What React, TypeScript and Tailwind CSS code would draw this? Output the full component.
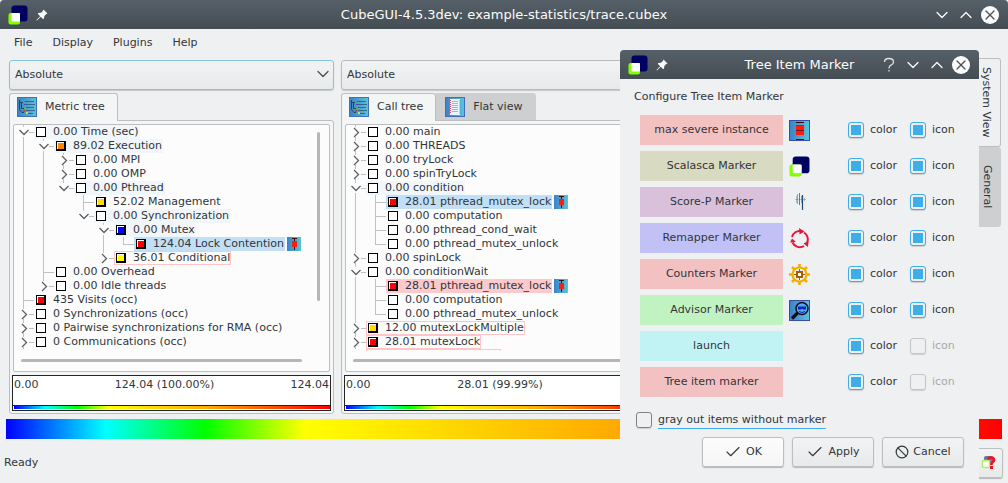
import React from 'react';
import { Ban, Check, ChevronDown, ChevronUp, X } from 'lucide-react';

type Row = {
  // one character per indent cell: | line, + tee, L end, v/V open, >/) closed (V and ) are last children)
  branch: string;
  text: string;
  fill?: string;
  mark?: 'path' | 'selected' | 'marked' | 'framed';
  pin?: boolean;
};

const metricRows: Row[] = [
  { branch: 'v', text: '0.00 Time (sec)', mark: 'path' },
  { branch: '|v', text: '89.02 Execution', fill: '#ff8800', mark: 'path' },
  { branch: '||>', text: '0.00 MPI' },
  { branch: '||>', text: '0.00 OMP' },
  { branch: '||V', text: '0.00 Pthread', mark: 'path' },
  { branch: '|| +', text: '52.02 Management', fill: '#ffdd00' },
  { branch: '|| V', text: '0.00 Synchronization', mark: 'path' },
  { branch: '||  v', text: '0.00 Mutex', fill: '#0000ff', mark: 'path' },
  { branch: '||  |L', text: '124.04 Lock Contention', fill: '#ff0000', mark: 'selected', pin: true },
  { branch: '||  )', text: '36.01 Conditional', fill: '#ffff00', mark: 'framed' },
  { branch: '|+', text: '0.00 Overhead' },
  { branch: '|)', text: '0.00 Idle threads' },
  { branch: '+', text: '435 Visits (occ)', fill: '#ff0000' },
  { branch: '>', text: '0 Synchronizations (occ)' },
  { branch: '>', text: '0 Pairwise synchronizations for RMA (occ)' },
  { branch: '>', text: '0 Communications (occ)' },
];

const callRows: Row[] = [
  { branch: '>', text: '0.00 main' },
  { branch: '>', text: '0.00 THREADS' },
  { branch: '>', text: '0.00 tryLock' },
  { branch: '>', text: '0.00 spinTryLock' },
  { branch: 'v', text: '0.00 condition', mark: 'path' },
  { branch: '|+', text: '28.01 pthread_mutex_lock', fill: '#ff0000', mark: 'selected', pin: true },
  { branch: '|+', text: '0.00 computation' },
  { branch: '|+', text: '0.00 pthread_cond_wait' },
  { branch: '|L', text: '0.00 pthread_mutex_unlock' },
  { branch: '>', text: '0.00 spinLock' },
  { branch: 'v', text: '0.00 conditionWait' },
  { branch: '|+', text: '28.01 pthread_mutex_lock', fill: '#ff0000', mark: 'marked', pin: true },
  { branch: '|+', text: '0.00 computation' },
  { branch: '|L', text: '0.00 pthread_mutex_unlock' },
  { branch: '>', text: '12.00 mutexLockMultiple', fill: '#ffdd00', mark: 'framed' },
  { branch: '>', text: '28.01 mutexLock', fill: '#ff0000', mark: 'framed' },
];

const markStyles = {
  path: 'bg-[#f1f6fa]',
  selected: 'bg-[#c1dff5]',
  marked: 'bg-[#fdc9cb]',
  framed: 'outline outline-1 -outline-offset-1 outline-[#fdc5c6]',
};

const rainbow = 'bg-[linear-gradient(to_right,#0000ff,#00ffff_10%,#00ff00_20%,#ffff00_30%,#ffa800_62%,#ff0000)]';

const Branch: React.FC<{ kind: string }> = ({ kind }) => (
  <svg width="20" height="14" className="shrink-0" fill="none" shapeRendering="crispEdges" stroke="#c0c1c2">
    {kind === '|' && <path d="M9.5 0V14" />}
    {kind === '+' && <path d="M9.5 0V14M9.5 7.5H20" />}
    {kind === 'L' && <path d="M9.5 0V7.5H20" />}
    {'v>'.includes(kind) && <path d="M9.5 0V2M9.5 12V14M15 7.5H20" />}
    {'V)'.includes(kind) && <path d="M9.5 0V2M15 7.5H20" />}
    {'vV'.includes(kind) && <path d="M5.5 5L10 9.5L14.5 5" stroke="#5c6063" shapeRendering="auto" strokeWidth="1.3" />}
    {'>)'.includes(kind) && <path d="M8 3L12.5 7.5L8 12" stroke="#5c6063" shapeRendering="auto" strokeWidth="1.3" />}
  </svg>
);

const Swatch: React.FC<{ fill?: string }> = ({ fill }) => (
  <svg width="10" height="10" className="shrink-0" shapeRendering="crispEdges">
    <rect width="10" height="10" fill="#000" />
    <rect x="1" y="1" width={fill ? 7 : 8} height={fill ? 7 : 8} fill="#fff" />
    {fill && <rect x="2" y="2" width="6" height="6" fill={fill} />}
  </svg>
);

const PinIcon: React.FC = () => (
  <svg width="14" height="14" className="ml-[2px] shrink-0" shapeRendering="crispEdges">
    <rect width="14" height="14" fill="url(#blue)" />
    <path d="M5 1.5H10M7.5 1V13" stroke="#3c1010" />
    <rect x="5" y="4" width="5" height="6" fill="#f3220f" />
  </svg>
);

const CubeIcon: React.FC<{ size: number }> = ({ size }) => (
  <svg width={size} height={size} viewBox="0 0 20 20">
    <rect x="3.5" y="0.5" width="16" height="16" rx="3" fill="#000060" />
    <rect x="0.5" y="8" width="11.5" height="11.5" rx="2" fill="#80ff00" />
    <rect x="3.5" y="8" width="8.5" height="8.5" rx="1" fill="#fff" />
  </svg>
);

const Pushpin: React.FC = () => (
  <svg width="12" height="12" viewBox="0 0 12 12" fill="#fcfcfc">
    <path d="M7.5 0.5L11.5 4.5L10.3 5L8.3 7L8 9.8L7 10L4.7 7.7L1 11.5L0.5 11L4.2 7.2L2 5L2.2 4L5 3.8L7 1.8Z" />
  </svg>
);

const TreeIcon: React.FC = () => (
  <svg width="20" height="20" viewBox="0 0 20 20">
    <defs>
      <linearGradient id="blue">
        <stop offset="0" stopColor="#3a82c8" />
        <stop offset="1" stopColor="#5cc2da" />
      </linearGradient>
    </defs>
    <rect x="0.5" y="0.5" width="19" height="19" fill="url(#blue)" stroke="#3f6fba" />
    <g fill="none" stroke="#28455e">
      <path d="M2.5 3V12.5L5 15.5H7M2.5 5.5H7M4.5 6V11.5H7" />
      <path d="M8 4.5H17M9 7.5H18M9 10.5H17M9 13.5H18M10 16.5H16" strokeWidth="0.9" strokeOpacity="0.75" />
    </g>
    <path d="M6 4h2v2h-2z" fill="#24b6a4" />
    <path d="M7 10h2v2h-2z" fill="#35c936" />
    <path d="M6 13h2v2h-2z" fill="#d0384c" />
    <path d="M9 15h2v2h-2z" fill="#e2d63a" />
    <path d="M7 7h2v1h-2z" fill="#6b3cc7" />
  </svg>
);

const FlatIcon: React.FC = () => (
  <svg width="20" height="20" viewBox="0 0 20 20">
    <rect x="0.5" y="0.5" width="19" height="19" fill="url(#blue)" stroke="#3f6fba" />
    <rect x="5" y="2" width="10" height="16" fill="#eaf6ff" />
    <path d="M7 4.5H13M7 6.5H13M7 8.5H13M7 10.5H13M7 12.5H13M7 14.5H13" stroke="#8abce8" />
    <path d="M5.5 3V17" stroke="#e05060" strokeDasharray="1 1" />
    <path d="M14.5 3V17" stroke="#a9d3f3" />
  </svg>
);

const SevereIcon: React.FC = () => (
  <svg width="21" height="21" viewBox="0 0 21 21" shapeRendering="crispEdges">
    <rect x="0.5" y="0.5" width="20" height="20" fill="url(#blue)" stroke="#3450a8" />
    <path d="M7 2.5H15M7 19.5H15" stroke="#2b0c14" />
    <rect x="7" y="6" width="8" height="9" fill="#ff1c0a" />
    <path d="M7 10.5H15" stroke="#8c1008" />
    <path d="M7 5.5H15" stroke="#c02018" />
  </svg>
);

const ScorePIcon: React.FC = () => (
  <svg width="21" height="21" viewBox="0 0 21 21" stroke="#1d4d75" fill="none">
    <path d="M6 7.5H17" strokeOpacity="0.25" />
    <path d="M7.5 4V11" strokeOpacity="0.3" />
    <path d="M8.5 2V12" strokeOpacity="0.45" />
    <path d="M10.5 1V13" strokeOpacity="0.7" />
    <path d="M12.5 4V11" strokeOpacity="0.45" />
    <path d="M13.5 3V18" strokeWidth="1.2" />
    <path d="M15.5 6V9" strokeOpacity="0.3" />
  </svg>
);

const RemapperIcon: React.FC = () => (
  <svg width="21" height="21" viewBox="0 0 21 21">
    <g fill="none" stroke="#e3173e" strokeWidth="2">
      <path d="M3 9A8 8 0 0 1 12 3" />
      <path d="M15 4.5A8 8 0 0 1 18 15" />
      <path d="M15 18A8 8 0 0 1 3.5 14.5" />
    </g>
    <path d="M10 0L15.5 3.5L10.5 6.5Z M19.5 13L14.5 15.5L19 19Z M1 14.5L3 10.5L7 14Z" fill="#e3173e" />
  </svg>
);

const GearIcon: React.FC = () => (
  <svg width="21" height="21" viewBox="0 0 21 21">
    <circle cx="10.5" cy="10.5" r="7" fill="none" stroke="#f0b000" strokeWidth="2.2" />
    <path
      d="M10.5 0V4M10.5 17V21M0 10.5H4M17 10.5H21M3 3L5.5 5.5M15.5 15.5L18 18M18 3L15.5 5.5M3 18L5.5 15.5"
      stroke="#f0b000"
      strokeWidth="2.6"
    />
    <path d="M10.5 5V16M5 10.5H16" stroke="#a85c00" strokeWidth="1" />
    <rect x="8" y="8" width="5" height="5" fill="#fff" stroke="#a85c00" strokeWidth="2" />
  </svg>
);

const AdvisorIcon: React.FC = () => (
  <svg width="21" height="21" viewBox="0 0 21 21">
    <rect x="0.5" y="0.5" width="20" height="20" fill="url(#blue)" stroke="#3450a8" />
    <circle cx="13" cy="8.5" r="6" fill="#55a9e8" stroke="#160a1c" strokeWidth="1.5" />
    <path d="M9 6.5H17V9.5H14L13 8.5L12 9.5H9Z" fill="#0a22c8" />
    <path d="M10 11.5Q13 13.5 16 11.5" stroke="#0a22c8" fill="none" />
    <path d="M8.5 13L3 18.5" stroke="#160a1c" strokeWidth="3.2" />
  </svg>
);

const HelpCubeIcon: React.FC = () => (
  <svg width="16" height="16" viewBox="0 0 16 16">
    <rect x="3" y="1" width="9" height="9" rx="2" fill="#7070a8" />
    <rect x="1.5" y="5.5" width="7" height="7" rx="1" fill="#fff" stroke="#b0f060" strokeWidth="1.6" />
    <path d="M7.5 4.5Q7.5 2.5 10.3 2.5Q13 2.5 13 5Q13 6.5 11.5 7.3Q10.3 8 10.3 10" stroke="#f5101c" strokeWidth="2.6" fill="none" />
    <rect x="9" y="11" width="3" height="3" fill="#f5101c" />
  </svg>
);

const CloseButton: React.FC = () => (
  <button aria-label="Close" className="mx-px flex size-[18px] items-center justify-center rounded-full bg-[#fcfcfc] text-[#4a5157]">
    <X size={16} strokeWidth={1.8} />
  </button>
);

const TitleBar: React.FC<{ title: string; help?: boolean }> = ({ title, help }) => (
  <header className="grid h-[29px] grid-cols-[1fr_auto_1fr] items-center rounded-t-[4px] bg-linear-to-b from-[#566068] to-[#454d54] px-2 text-[13px] text-[#fcfcfc]">
    <div className="flex items-center gap-2">
      <CubeIcon size={20} />
      <Pushpin />
    </div>
    <h1 className="whitespace-nowrap">{title}</h1>
    <div className="flex items-center justify-end gap-1">
      {help && (
        <button aria-label="Help" className="w-5 text-[#dfe1e2]">
          <svg width="20" height="20" viewBox="0 0 20 20" fill="none" stroke="currentColor" strokeWidth="1.3">
            <path d="M5.5 7Q5.5 3.5 10 3.5Q14.5 3.5 14.5 7Q14.5 9 12 10.2Q10 11.2 10 13.5M10 15V16.5" />
          </svg>
        </button>
      )}
      <button aria-label="Minimize"><ChevronDown size={20} strokeWidth={1.5} /></button>
      <button aria-label="Maximize"><ChevronUp size={20} strokeWidth={1.5} /></button>
      <CloseButton />
    </div>
  </header>
);

const ModeSelect: React.FC<{ label: string; focused?: boolean }> = ({ label, focused }) => (
  <div className="relative">
    <select
      aria-label={label}
      className={`h-[30px] w-full appearance-none rounded-[3px] border bg-linear-to-b from-[#f2f3f3] to-[#e8e9ea] pt-px pl-[5px] shadow-[0_1px_1px_#c4c6c8] ${
        focused ? 'border-[#7fc5ea]' : 'border-[#b9bbbd]'
      }`}
    >
      <option>Absolute</option>
    </select>
    <ChevronDown size={20} strokeWidth={1.5} className="pointer-events-none absolute top-1 right-px text-[#4a4e51]" />
  </div>
);

const Tab: React.FC<{ icon: React.ReactNode; text: string; active?: boolean }> = ({ icon, text, active }) => (
  <button
    role="tab"
    aria-selected={!!active}
    className={`flex items-center gap-2 ${
      active
        ? '-mb-px rounded-t-[3px] border border-b-0 border-[#bcbec0] bg-[#f4f6f6] pr-3 pb-px pl-[7px]'
        : 'rounded-tr-[3px] bg-[#cecfd0] pr-[14px] pl-[9px]'
    }`}
  >
    {icon}
    <span className="pt-px">{text}</span>
  </button>
);

const Tree: React.FC<{ rows: Row[]; more?: boolean }> = ({ rows, more }) => (
  <div className="mx-px rounded-[2px] border border-[#bcbec0] bg-[#fcfcfc] pb-[9px]">
    <div className="flex">
      <div role="tree" className="h-[226px] min-w-0 flex-1 overflow-hidden">
        {rows.map((row, i) => (
          <div key={i} role="treeitem" className="flex h-[14px] items-center">
            {row.branch.split('').map((kind, n) => (
              <Branch key={n} kind={kind} />
            ))}
            <span className={`flex h-[14px] items-center gap-[7px] pr-px pl-[2px] whitespace-nowrap ${row.mark ? markStyles[row.mark] : ''}`}>
              <Swatch fill={row.fill} />
              <span className="pt-px">{row.text}</span>
            </span>
            {row.pin && <PinIcon />}
          </div>
        ))}
        {more && <div className="ml-5 h-[14px] w-[135px] border border-[#fdc5c6]"></div>}
      </div>
      <div className="mt-[7px] mr-[9px] h-[169px] w-[3px] rounded-full bg-[#b5b6b7]"></div>
    </div>
    <div className="mt-2 mr-[27px] ml-[7px] h-[3px] rounded-full bg-[#b5b6b7]"></div>
  </div>
);

const ValueBar: React.FC<{ values: string[] }> = ({ values }) => (
  <div className="mt-[3px] border border-[#232629] bg-white">
    <div className="flex h-[29px] justify-between px-px leading-[18px]">
      {values.map((value) => (
        <span key={value}>{value}</span>
      ))}
    </div>
    <div className="border-t border-[#232629] pb-px pl-px">
      <div className={`h-[3px] ${rainbow}`}></div>
    </div>
  </div>
);

const paneClass = 'rounded-[3px] rounded-tl-none border border-[#bcbec0] bg-[#f4f6f6] px-[2px] pt-[3px] pb-[2px]';

const markers = [
  { name: 'max severe instance', color: 'bg-[#f3c1c2]', icon: <SevereIcon /> },
  { name: 'Scalasca Marker', color: 'bg-[#d8dac1]', icon: <CubeIcon size={21} /> },
  { name: 'Score-P Marker', color: 'bg-[#d9c1db]', icon: <ScorePIcon /> },
  { name: 'Remapper Marker', color: 'bg-[#c1c1f5]', icon: <RemapperIcon /> },
  { name: 'Counters Marker', color: 'bg-[#f3c1c2]', icon: <GearIcon /> },
  { name: 'Advisor Marker', color: 'bg-[#c1f3c2]', icon: <AdvisorIcon /> },
  { name: 'launch', color: 'bg-[#c1f3f5]', icon: null },
  { name: 'Tree item marker', color: 'bg-[#f3c1c2]', icon: null },
];

const checkClass =
  'size-4 shrink-0 appearance-none rounded-[3px] border border-[#7f8386] bg-clip-content p-[2px] shadow-[0_1px_1px_#cdcfd1] checked:border-[#3daee9] checked:bg-[#3daee9] disabled:border-[#c2c4c5]';

const CheckOption: React.FC<{ text: string; disabled?: boolean }> = ({ text, disabled }) => (
  <label className={`flex items-center gap-[6px] ${disabled ? 'text-[#a8aaab]' : ''}`}>
    <input type="checkbox" defaultChecked={!disabled} disabled={disabled} className={checkClass} />
    <span className="pt-px">{text}</span>
  </label>
);

const buttonClass =
  'flex h-[30px] w-[82px] items-center justify-center gap-1 rounded-[3px] border border-[#bcbec0] bg-linear-to-b shadow-[0_1px_1px_#b4b6b8]';

const MarkerDialog: React.FC = () => (
  <section role="dialog" aria-label="Tree Item Marker" className="absolute top-[50px] right-[29px] w-[359px] rounded-t-[4px] bg-[#eff0f1]">
    <TitleBar title="Tree Item Marker" help />
    <div className="pt-2 pr-[15px] pb-[15px] pl-[14px]">
      <p className="leading-5">Configure Tree Item Marker</p>
      <div className="mt-2 flex flex-col gap-[6px] pl-[6px]">
        {markers.map((marker) => (
          <div key={marker.name} className="grid grid-cols-[143px_59px_62px_auto] items-center">
            <button className={`h-[30px] pt-px ${marker.color}`}>{marker.name}</button>
            <div className="pl-[6px]">{marker.icon}</div>
            <div className="col-span-2 grid grid-cols-[62px_auto] pl-[6px]">
              <CheckOption text="color" />
              <CheckOption text="icon" disabled={!marker.icon} />
            </div>
          </div>
        ))}
      </div>
      <label className="mt-[14px] ml-[2px] flex w-fit items-center gap-[6px]">
        <input type="checkbox" className={checkClass} />
        <span className="border-b border-[#3daee9] pt-px leading-4">gray out items without marker</span>
      </label>
      <div className="mt-2 flex justify-end gap-2">
        <button className={`${buttonClass} from-[#fcfcfc] to-[#f6f6f6]`}>
          <Check size={18} strokeWidth={1.5} />
          <span className="pt-px">OK</span>
        </button>
        <button className={`${buttonClass} from-[#f2f3f3] to-[#e8e9ea]`}>
          <Check size={18} strokeWidth={1.5} />
          <span className="pt-px">Apply</span>
        </button>
        <button className={`${buttonClass} from-[#f2f3f3] to-[#e8e9ea]`}>
          <Ban size={14} strokeWidth={2} />
          <span className="pt-px">Cancel</span>
        </button>
      </div>
    </div>
  </section>
);

const App: React.FC = () => {
  return (
    <div className="relative min-h-screen bg-[#eff0f1] font-['DejaVu_Sans',sans-serif] text-[11px] text-[#31363b]">
      <TitleBar title="CubeGUI-4.5.3dev: example-statistics/trace.cubex" />

      {/* Menu */}
      <nav className="flex h-[27px] items-center gap-5 px-[14px] pt-px">
        {['File', 'Display', 'Plugins', 'Help'].map((item) => (
          <button key={item}>{item}</button>
        ))}
      </nav>

      {/* Tree panes and side tabs */}
      <main className="flex pr-[7px] pl-[9px]">
        <div className="grid min-w-0 flex-1 grid-cols-[65fr_65fr_61fr] gap-[7px] pt-1">
          <div className="min-w-0">
            <ModeSelect label="Metric mode" focused />
            <div role="tablist" className="mt-[3px] flex h-[27px]">
              <Tab icon={<TreeIcon />} text="Metric tree" active />
            </div>
            <div className={paneClass}>
              <Tree rows={metricRows} />
              <ValueBar values={['0.00', '124.04 (100.00%)', '124.04']} />
            </div>
          </div>
          <div className="min-w-0">
            <ModeSelect label="Call mode" />
            <div role="tablist" className="mt-[3px] flex h-[27px]">
              <Tab icon={<TreeIcon />} text="Call tree" active />
              <Tab icon={<FlatIcon />} text="Flat view" />
            </div>
            <div className={paneClass}>
              <Tree rows={callRows} more />
              <ValueBar values={['0.00', '28.01 (99.99%)', '28.02']} />
            </div>
          </div>
          <div className="flex min-w-0 flex-col">
            <ModeSelect label="System mode" />
            <div className={`mt-[30px] flex-1 ${paneClass}`}></div>
          </div>
        </div>
        <div role="tablist" className="flex w-[23px] flex-col pt-[2px]">
          <button role="tab" aria-selected="true" className="flex h-[89px] items-center justify-center rounded-r-[3px] border border-l-0 border-[#bcbec0] pr-[6px] [writing-mode:vertical-rl]">
            System View
          </button>
          <button role="tab" aria-selected="false" className="flex h-[80px] items-center justify-center rounded-r-[3px] bg-[#cecfd0] pr-[6px] [writing-mode:vertical-rl]">
            General
          </button>
        </div>
      </main>

      {/* Color scale */}
      <div className={`mt-[5px] mr-[6px] ml-[6px] h-5 ${rainbow}`}></div>

      <footer className="flex items-center justify-between pt-[9px] pr-[5px] pl-1">
        <span className="pt-px">Ready</span>
        <button aria-label="Context help" className="flex h-[30px] w-7 items-center justify-center rounded-[3px] border border-[#bcbec0] bg-linear-to-b from-[#f2f3f3] to-[#e8e9ea] shadow-[0_1px_1px_#b4b6b8]">
          <HelpCubeIcon />
        </button>
      </footer>

      <MarkerDialog />
    </div>
  );
};

export default App;
